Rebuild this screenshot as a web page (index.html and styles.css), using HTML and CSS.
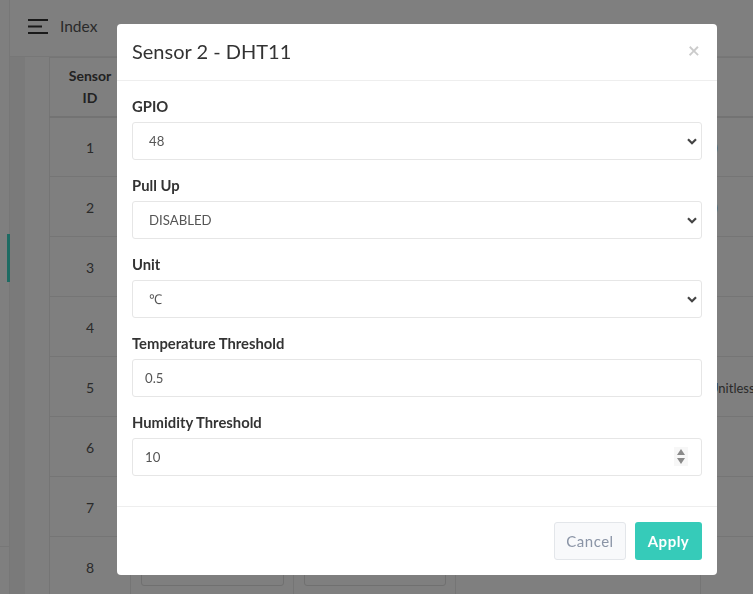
FILE: index.html
```html
<!DOCTYPE html>
<html lang="en">
<head>
<meta charset="utf-8">
<title>Index</title>
<link rel="stylesheet" href="styles.css">
</head>
<body>
<div class="app">
  <aside class="sidebar">
    <div class="active-bar"></div>
    <div class="sidebar-foot"></div>
  </aside>
  <div class="main">
    <header class="topbar">
      <svg class="burger" width="20" height="15" viewBox="0 0 20 15"><path d="M0 1h20M0 7.5h14M0 14h20" stroke="#333" stroke-width="2" fill="none"/></svg>
      <span class="page-title">Index</span>
    </header>
    <div class="content">
      <div class="card">
        <table class="grid">
          <colgroup>
            <col class="c1"><col class="c2"><col class="c3"><col class="c4"><col class="c5">
          </colgroup>
          <thead>
            <tr><th>Sensor<br>ID</th><th>Name</th><th>Type</th><th>Config</th><th></th></tr>
          </thead>
          <tbody>
            <tr><td>1</td><td><div class="cell-box"></div></td><td><div class="cell-box"></div></td><td>GPIO 47</td><td class="val"><span class="link">0)</span></td></tr>
            <tr><td>2</td><td><div class="cell-box"></div></td><td><div class="cell-box"></div></td><td>GPIO 48</td><td class="val"><span class="link">0)</span></td></tr>
            <tr><td>3</td><td><div class="cell-box"></div></td><td><div class="cell-box"></div></td><td></td><td class="val"></td></tr>
            <tr><td>4</td><td><div class="cell-box"></div></td><td><div class="cell-box"></div></td><td></td><td class="val"></td></tr>
            <tr><td>5</td><td><div class="cell-box"></div></td><td><div class="cell-box"></div></td><td></td><td class="val"><span class="unit">Unitless,</span></td></tr>
            <tr><td>6</td><td><div class="cell-box"></div></td><td><div class="cell-box"></div></td><td></td><td class="val"></td></tr>
            <tr><td>7</td><td><div class="cell-box"></div></td><td><div class="cell-box"></div></td><td></td><td class="val"></td></tr>
            <tr><td>8</td><td><div class="cell-box"></div></td><td><div class="cell-box"></div></td><td></td><td class="val"></td></tr>
          </tbody>
        </table>
      </div>
    </div>
  </div>
</div>

<div class="backdrop"></div>

<div class="modal">
  <div class="modal-header">
    <h4 class="modal-title">Sensor 2 - DHT11</h4>
    <span class="close">&times;</span>
  </div>
  <div class="modal-body">
    <div class="group">
      <label class="label">GPIO</label>
      <div class="select-wrap">
        <select class="control select"><option>48</option></select>
        <svg class="chev" width="10" height="7" viewBox="0 0 10 7"><path d="M1 1.2l4 4 4-4" stroke="#444" stroke-width="2.2" fill="none"/></svg>
      </div>
    </div>
    <div class="group">
      <label class="label">Pull Up</label>
      <div class="select-wrap">
        <select class="control select"><option>DISABLED</option></select>
        <svg class="chev" width="10" height="7" viewBox="0 0 10 7"><path d="M1 1.2l4 4 4-4" stroke="#444" stroke-width="2.2" fill="none"/></svg>
      </div>
    </div>
    <div class="group">
      <label class="label">Unit</label>
      <div class="select-wrap">
        <select class="control select"><option>℃</option></select>
        <svg class="chev" width="10" height="7" viewBox="0 0 10 7"><path d="M1 1.2l4 4 4-4" stroke="#444" stroke-width="2.2" fill="none"/></svg>
      </div>
    </div>
    <div class="group">
      <label class="label">Temperature Threshold</label>
      <input class="control input" type="text" value="0.5">
    </div>
    <div class="group">
      <label class="label">Humidity Threshold</label>
      <div class="select-wrap">
        <input class="control input" type="number" value="10">
        <svg class="spin" width="14" height="19" viewBox="0 0 14 19"><rect width="14" height="19" fill="#f7f7f7"/><path d="M7 2l4 6H3z M3 11h8l-4 6z" fill="#8a8a8a"/></svg>
      </div>
    </div>
  </div>
  <div class="modal-footer">
    <button class="btn btn-cancel">Cancel</button>
    <button class="btn btn-apply">Apply</button>
  </div>
</div>
</body>
</html>
```

FILE: styles.css
```css
* { box-sizing: border-box; }
html, body { margin: 0; height: 100%; overflow: hidden; }
body {
  font-family: Lato, "Open Sans", "Noto Sans", sans-serif;
  background: #fff;
  color: #333;
}
.app { display: flex; height: 594px; }

.sidebar {
  width: 10px;
  flex: none;
  display: flex;
  flex-direction: column;
  border-right: 1px solid #eee;
}
.active-bar {
  margin-top: 234px;
  margin-left: 7px;
  width: 3px;
  height: 48px;
  background: #3cd6c6;
}
.sidebar-foot {
  margin-top: auto;
  height: 48px;
  border-top: 1px solid #eee;
}

.main { flex: 1; display: flex; flex-direction: column; min-width: 0; }
.topbar {
  height: 57px;
  flex: none;
  display: flex;
  align-items: center;
  padding-left: 18px;
  gap: 12px;
  border-bottom: 1px solid #eee;
}
.burger { display: block; margin-top: -4px; }
.page-title { font-size: 15.5px; color: #555; margin-top: -4px; }

.content {
  flex: 1;
  display: flex;
  background: #f4f4f4;
  padding-left: 15px;
  overflow: hidden;
}
.card {
  flex: 1;
  background: #fff;
  padding-left: 24px;
  overflow: hidden;
}
.grid {
  border-collapse: collapse;
  table-layout: fixed;
  width: 951px;
  font-size: 14px;
  color: #555;
}
.c1 { width: 81px; }
.c2 { width: 163px; }
.c3 { width: 162px; }
.c4 { width: 245px; }
.c5 { width: 300px; }
.grid th, .grid td {
  border: 1px solid #eaeaea;
  text-align: center;
  padding: 0 10px;
}
.grid th {
  height: 59px;
  border-bottom: 2px solid #e6e6e6;
  font-weight: 700;
  color: #444;
  line-height: 22px;
  padding-top: 1px;
}
.grid td { height: 60px; padding-top: 1px; }
.grid td.val { text-align: left; padding-left: 4px; color: #555; white-space: nowrap; }
.link { color: #4b45b8; font-size: 15px; }
.unit { font-size: 13px; padding-left: 4px; }
.cell-box {
  height: 38px;
  border: 1px solid #e0e0e0;
  border-radius: 3px;
  margin: 0 -1px 0 0;
}

.backdrop {
  position: fixed;
  inset: 0;
  background: rgba(0, 0, 0, 0.5);
}

.modal {
  position: fixed;
  left: 117px;
  top: 24px;
  width: 600px;
  background: #fff;
  border-radius: 4px;
}
.modal-header {
  height: 57px;
  padding: 0 15px;
  display: flex;
  align-items: center;
  justify-content: space-between;
  border-bottom: 1px solid #eee;
}
.modal-title {
  margin: -2px 0 0;
  font-size: 20px;
  font-weight: 400;
  color: #333;
  line-height: 26px;
}
.close {
  font-size: 21px;
  font-weight: 700;
  color: #000;
  opacity: 0.2;
  line-height: 1;
  margin: -6px 2px 0 0;
}
.modal-body { padding: 15px; }
.group { margin-bottom: 15px; }
.label {
  display: block;
  font-size: 14.8px;
  font-weight: 700;
  line-height: 21px;
  margin-bottom: 5px;
  color: #333;
}
.select-wrap { position: relative; }
.control {
  display: block;
  width: 100%;
  height: 38px;
  border: 1px solid #e6e6e6;
  border-radius: 3px;
  background: #fff;
  font-family: inherit;
  font-size: 13.2px;
  color: #555;
  outline: none;
  margin: 0;
}
.select { appearance: none; -webkit-appearance: none; padding: 0 30px 0 16px; }
.input { padding: 0 12px; }
.input::-webkit-inner-spin-button,
.input::-webkit-outer-spin-button { -webkit-appearance: none; margin: 0; }
.chev {
  position: absolute;
  right: 5px;
  top: 16px;
}
.spin {
  position: absolute;
  right: 14px;
  top: 9px;
}
.modal-footer {
  border-top: 1px solid #eee;
  padding: 15px;
  display: flex;
  justify-content: flex-end;
  gap: 9px;
}
.btn {
  height: 38px;
  border-radius: 3px;
  font-family: inherit;
  font-size: 15px;
  letter-spacing: 0.5px;
  padding: 0;
}
.btn-cancel {
  width: 72px;
  background: #f8f9fb;
  border: 1px solid #e3e6ea;
  color: #8a94a6;
}
.btn-apply {
  width: 67px;
  background: #36cbb9;
  border: none;
  color: #fff;
  font-weight: 700;
}
```
